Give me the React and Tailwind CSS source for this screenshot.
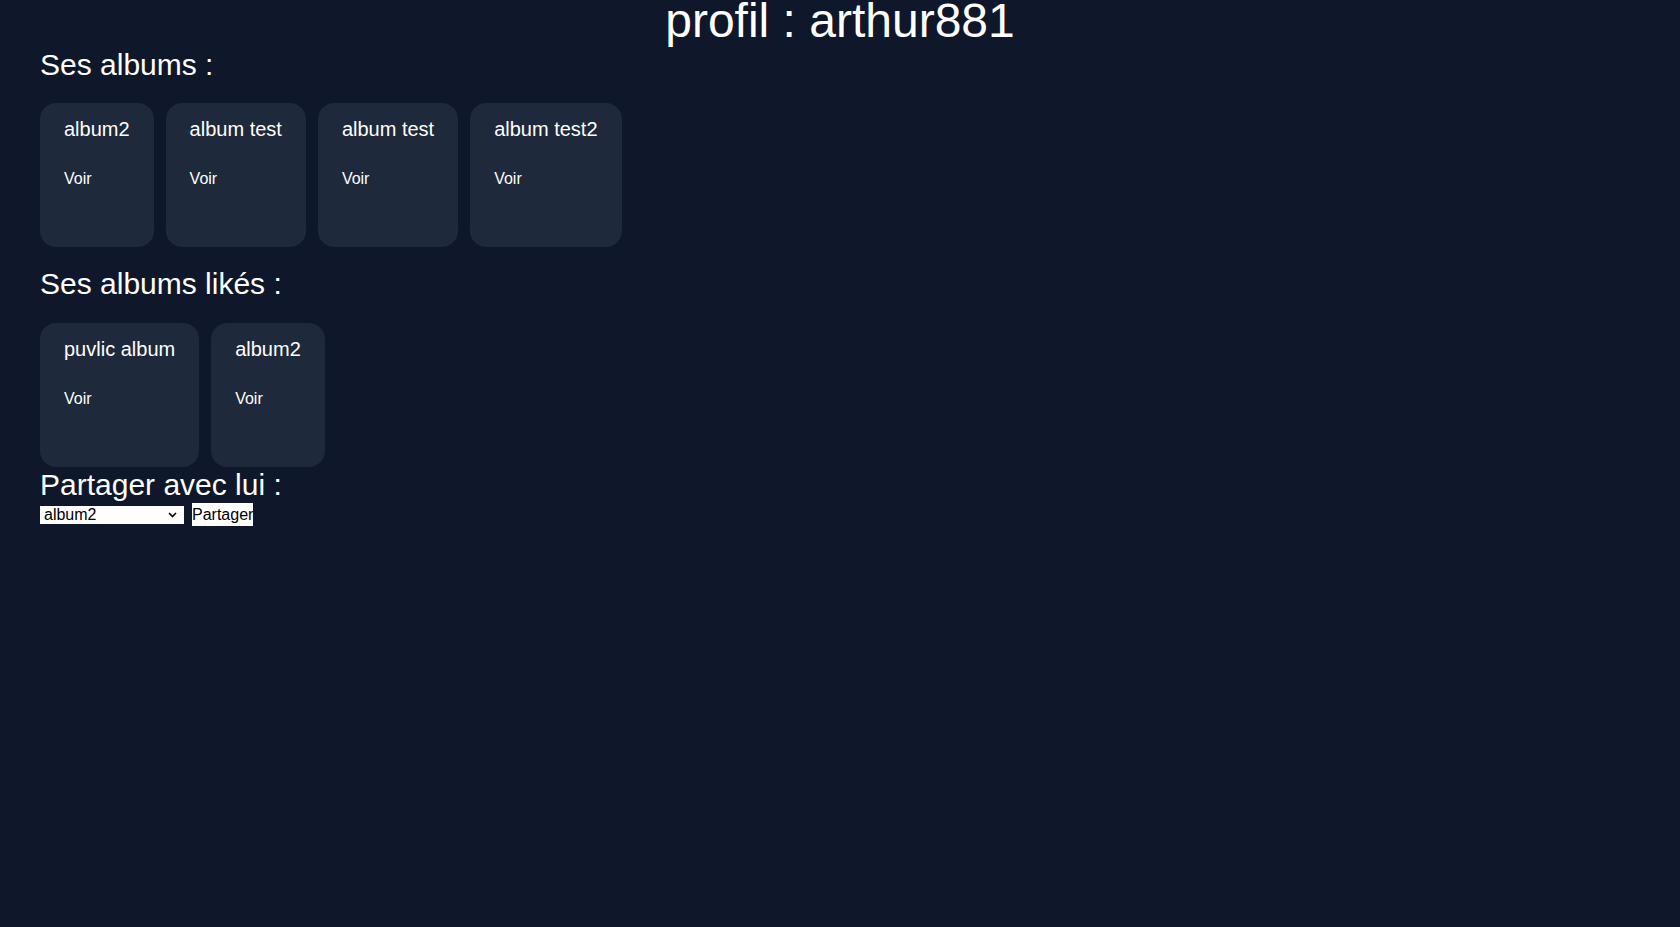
import React from "react";

const myAlbums = ["album2", "album test", "album test", "album test2"];
const likedAlbums = ["puvlic album", "album2"];

function AlbumCard({ name }) {
  return (
    <div className="h-36 rounded-2xl bg-[#1e293b] px-6 pt-3">
      <h3 className="whitespace-nowrap text-xl leading-7">{name}</h3>
      <a href="#" className="mt-6 block text-base leading-6">
        Voir
      </a>
    </div>
  );
}

export default function App() {
  return (
    <div className="min-h-screen bg-[#0f172a] px-10 font-['Liberation_Sans',Arial,sans-serif] text-white">
      <h1 className="text-center text-5xl leading-[42px]">profil : arthur881</h1>

      {/* Ses albums */}
      <h2 className="mt-[5px] text-3xl leading-9">Ses albums :</h2>
      <div className="mt-5 flex gap-3">
        {myAlbums.map((name, i) => (
          <AlbumCard key={i} name={name} />
        ))}
      </div>

      {/* Albums likés */}
      <h2 className="mt-[19px] text-3xl leading-9">Ses albums likés :</h2>
      <div className="mt-[21px] flex gap-3">
        {likedAlbums.map((name, i) => (
          <AlbumCard key={i} name={name} />
        ))}
      </div>

      {/* Partage */}
      <h2 className="text-3xl leading-9">Partager avec lui :</h2>
      <div className="flex items-center gap-2">
        <div className="relative">
          <select className="block h-[18px] w-36 appearance-none bg-white pl-1 text-base leading-[18px] text-black outline-none">
            <option>album2</option>
            <option>album test</option>
            <option>album test2</option>
          </select>
          <svg
            className="pointer-events-none absolute right-[7px] top-1/2 -translate-y-1/2"
            width="9"
            height="6"
            viewBox="0 0 9 6"
            fill="none"
            stroke="black"
            strokeWidth="1.6"
          >
            <path d="M1 1l3.5 3.5L8 1" />
          </svg>
        </div>
        <button className="h-[23px] w-[61px] overflow-hidden whitespace-nowrap bg-white px-0 text-left text-base text-black">
          Partager
        </button>
      </div>
    </div>
  );
}
